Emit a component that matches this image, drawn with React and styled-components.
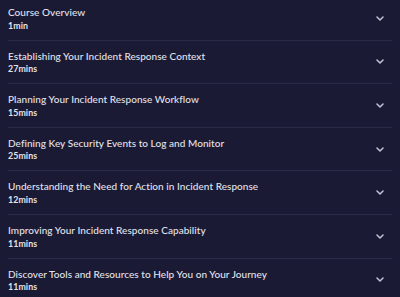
import React from 'react';
import styled, { createGlobalStyle } from 'styled-components';

const GlobalStyle = createGlobalStyle`
  html, body {
    margin: 0;
    padding: 0;
    background: #1b1a34;
    overflow: hidden;
  }
`;

const Page = styled.div`
  width: 400px;
  height: 297px;
  overflow: hidden;
  background: #1b1a34;
  font-family: Lato, "Liberation Sans", sans-serif;
`;

const List = styled.ul`
  list-style: none;
  margin: -3px 0 0;
  padding: 0 8px;
`;

const Row = styled.li`
  box-sizing: border-box;
  height: 43.6px;
  display: flex;
  align-items: center;
  justify-content: space-between;
  border-bottom: 1px solid #2b2a48;
  padding-right: 8px;
`;

const Info = styled.div`
  display: flex;
  flex-direction: column;
  padding-top: 1px;
`;

const Title = styled.span`
  font-size: 10px;
  line-height: 12px;
  font-weight: 500;
  letter-spacing: 0.05px;
  color: #e2e2ec;
`;

const Duration = styled.span`
  margin-top: 1.5px;
  font-size: 8.8px;
  line-height: 12px;
  font-weight: 700;
  letter-spacing: 0.1px;
  color: #e2e2ec;
`;

const Chevron = () => (
  <svg width="8" height="5" viewBox="0 0 8 5" fill="none">
    <polyline points="1,1 4,4 7,1" stroke="#c3c3d6" strokeWidth="1.5" strokeLinecap="round" strokeLinejoin="round" />
  </svg>
);

const modules = [
  ['Course Overview', '1min'],
  ['Establishing Your Incident Response Context', '27mins'],
  ['Planning Your Incident Response Workflow', '15mins'],
  ['Defining Key Security Events to Log and Monitor', '25mins'],
  ['Understanding the Need for Action in Incident Response', '12mins'],
  ['Improving Your Incident Response Capability', '11mins'],
  ['Discover Tools and Resources to Help You on Your Journey', '11mins'],
];

const App = () => (
  <Page>
    <GlobalStyle />
    <List>
      {modules.map(([title, time]) => (
        <Row key={title}>
          <Info>
            <Title>{title}</Title>
            <Duration>{time}</Duration>
          </Info>
          <Chevron />
        </Row>
      ))}
    </List>
  </Page>
);

export default App;
